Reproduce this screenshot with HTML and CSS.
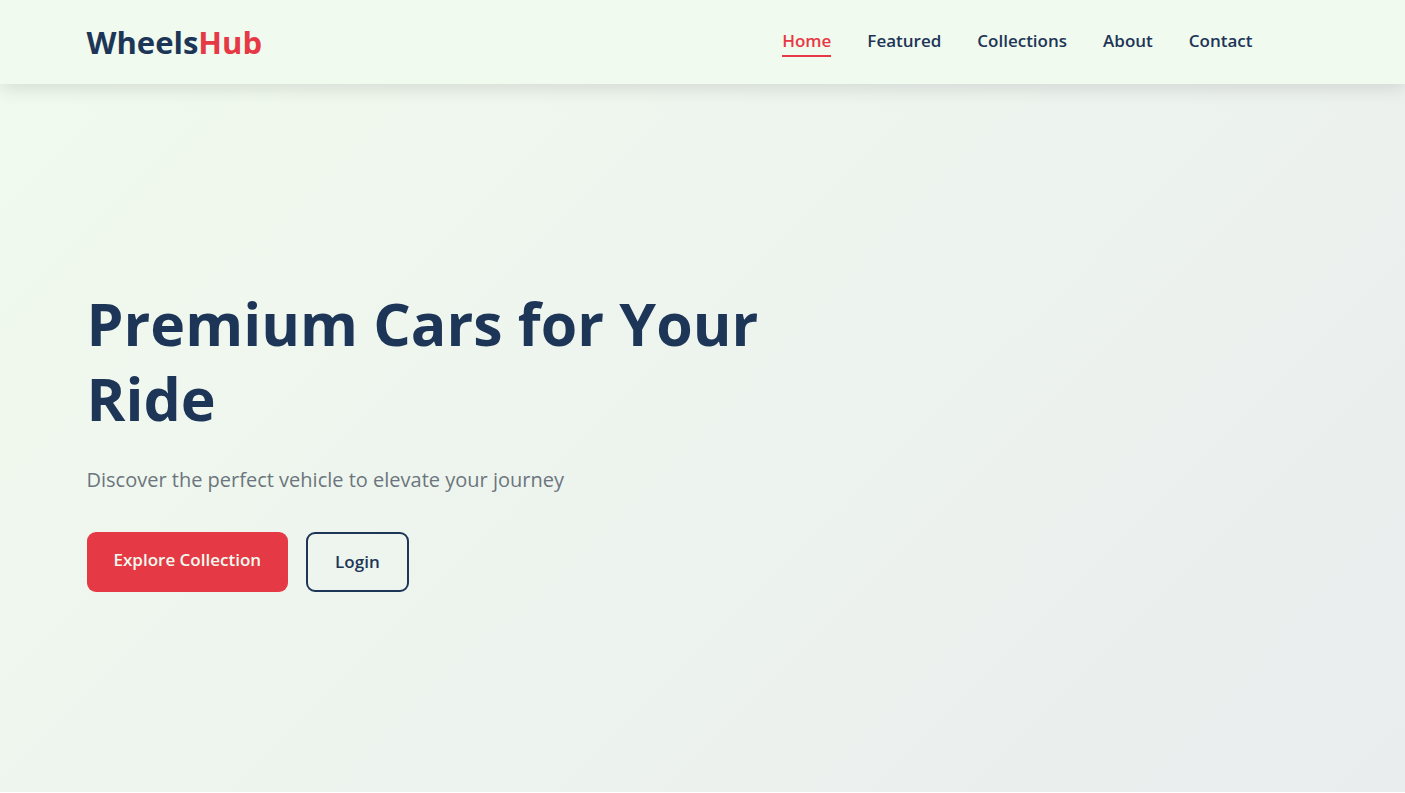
FILE: index.html
```html
<!DOCTYPE html>
<html lang="en">
<head>
<meta charset="utf-8">
<meta name="viewport" content="width=device-width, initial-scale=1">
<title>WheelsHub</title>
<link rel="stylesheet" href="styles.css">
</head>
<body>
<header class="header">
  <div class="container nav-bar">
    <a class="logo" href="#home">Wheels<span class="logo-accent">Hub</span></a>
    <nav class="nav">
      <a class="nav-link active" href="#home">Home</a>
      <a class="nav-link" href="#featured">Featured</a>
      <a class="nav-link" href="#collections">Collections</a>
      <a class="nav-link" href="#about">About</a>
      <a class="nav-link" href="#contact">Contact</a>
    </nav>
  </div>
</header>
<main class="hero" id="home">
  <div class="container">
    <div class="hero-content">
      <h1 class="hero-title">Premium Cars for Your Ride</h1>
      <p class="hero-text">Discover the perfect vehicle to elevate your journey</p>
      <div class="hero-actions">
        <a class="btn btn-primary" href="#collections">Explore Collection</a>
        <a class="btn btn-outline" href="#login">Login</a>
      </div>
    </div>
  </div>
</main>
</body>
</html>
```
FILE: styles.css
```css
* { box-sizing: border-box; margin: 0; padding: 0; }

body {
  min-height: 100vh;
  display: flex;
  flex-direction: column;
  font-family: "Segoe UI", "Open Sans", "Noto Sans", sans-serif;
  color: #1d3557;
  background: #fff;
}

a { color: inherit; text-decoration: none; }

.container {
  width: 100%;
  max-width: 1280px;
  margin: 0 auto;
  padding: 0 24px;
}

.header {
  position: relative;
  z-index: 1;
  padding: 20px 0;
  background: #f1faee;
  box-shadow: 0 4px 18px rgba(0, 0, 0, 0.12);
}

.nav-bar {
  display: flex;
  align-items: center;
  justify-content: space-between;
}

.logo { font-size: 31px; line-height: 44px; font-weight: 700; }
.logo-accent { color: #e63946; }

.nav { display: flex; gap: 36px; padding-right: 66px; }

.nav-link {
  font-size: 17px;
  line-height: 28px;
  font-weight: 600;
  border-bottom: 2px solid transparent;
}

.nav-link.active { color: #e63946; border-color: #e63946; }

.hero {
  flex: 1;
  display: flex;
  align-items: center;
  margin-bottom: 1px;
  padding-top: 2px;
  background: linear-gradient(135deg, #f1faee 0%, #e9edee 100%);
}

.hero-content { max-width: 720px; }

.hero-title {
  margin-bottom: 26px;
  font-size: 59px;
  line-height: 75px;
  font-weight: 700;
}

.hero-text {
  margin-bottom: 34px;
  font-size: 20px;
  line-height: 36px;
  color: #6c757d;
}

.hero-actions { display: flex; gap: 18px; }

.btn {
  padding: 14px 27px;
  font-size: 17px;
  line-height: 28px;
  font-weight: 600;
  border-radius: 9px;
}

.btn-primary { color: #f1faee; background: #e63946; }
.btn-outline { border: 2px solid #1d3557; }
```
